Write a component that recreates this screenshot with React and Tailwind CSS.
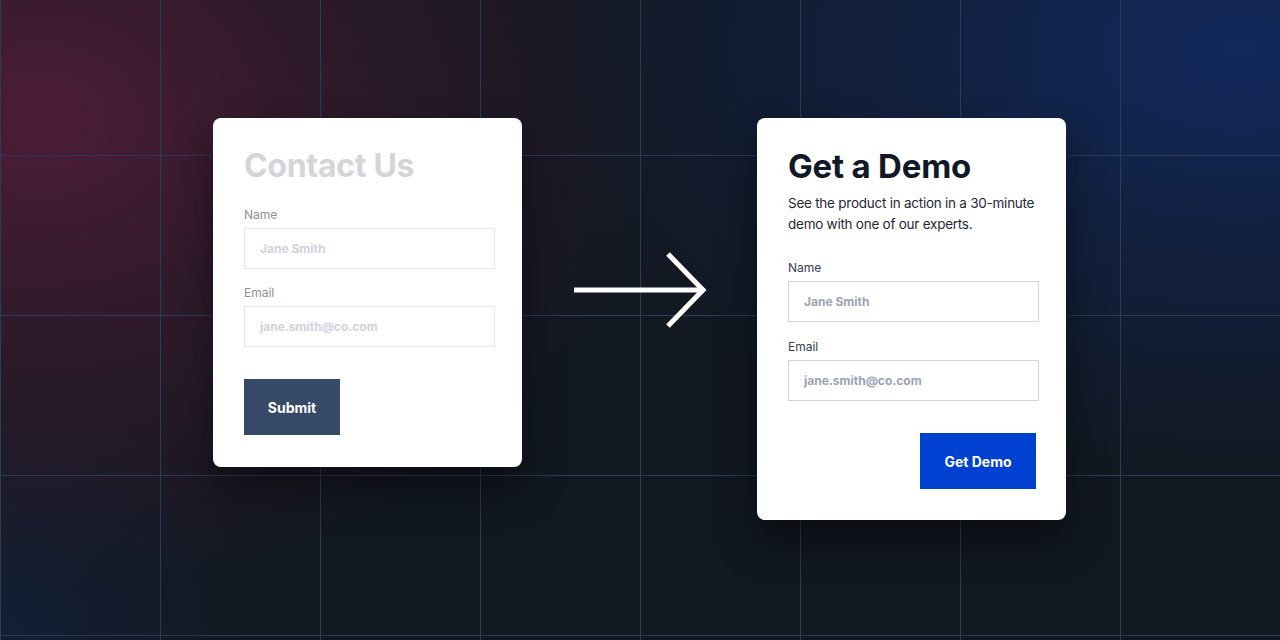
import React from "react";

const Field = ({ label, placeholder, tone }) => (
  <div className="flex flex-col">
    <label className={`text-[12px] leading-4 mb-[5px] ${tone === "muted" ? "text-[#8a9099]" : "text-[#374151]"}`}>
      {label}
    </label>
    <div
      className={`h-[41px] w-[251px] flex items-center px-[15px] border text-[12px] font-bold ${
        tone === "muted"
          ? "border-[#e5e7eb] text-[#cdd3de]"
          : "border-[#d1d5db] text-[#9aa3b5]"
      }`}
    >
      {placeholder}
    </div>
  </div>
);

const Arrow = () => (
  <svg width="136" height="76" viewBox="0 0 136 76" className="mt-[134px]">
    <path d="M2 38 H130" stroke="white" strokeWidth="5" fill="none" />
    <path d="M96 2 L131 38 L96 74" stroke="white" strokeWidth="5" fill="none" />
  </svg>
);

export default function App() {
  return (
    <div className="w-[1280px] h-[640px] overflow-hidden bg-[#121820] bg-[radial-gradient(ellipse_620px_470px_at_40px_120px,#4d1d35_0%,rgba(70,28,50,0.6)_40%,rgba(18,24,32,0)_100%),radial-gradient(ellipse_720px_430px_at_1240px_50px,#12295c_0%,rgba(18,40,90,0.6)_40%,rgba(18,24,32,0)_100%),radial-gradient(circle_260px_at_0px_640px,rgba(20,40,80,0.45)_0%,rgba(18,24,32,0)_100%)]">
      <div
        className="w-full h-full flex items-start pl-[213px] pt-[118px] bg-[linear-gradient(to_right,#2b3a55_1px,transparent_1px),linear-gradient(to_bottom,#2b3a55_1px,transparent_1px)] bg-[size:160px_160px] bg-[position:0_-5px]"
        style={{ fontFamily: "Inter, 'Noto Sans', sans-serif" }}
      >
        {/* Old form */}
        <div className="w-[309px] h-[349px] bg-white rounded-[8px] shadow-[0_20px_40px_rgba(0,0,0,0.45)] pt-[30px] pl-[31px] flex flex-col">
          <h2 className="text-[32px] leading-[36px] font-bold text-[#d4d5d8] tracking-[-0.3px]">Contact Us</h2>
          <div className="mt-[23px] flex flex-col gap-[16px]">
            <Field label="Name" placeholder="Jane Smith" tone="muted" />
            <Field label="Email" placeholder="jane.smith@co.com" tone="muted" />
          </div>
          <button className="mt-[32px] w-[96px] h-[56px] bg-[#364a68] text-white text-[14px] font-bold">
            Submit
          </button>
        </div>

        <div className="ml-[50px] mr-[49px]">
          <Arrow />
        </div>

        {/* New form */}
        <div className="w-[309px] h-[402px] bg-white rounded-[8px] shadow-[0_20px_40px_rgba(0,0,0,0.45)] pt-[30px] pl-[31px] pr-[27px] flex flex-col">
          <h2 className="text-[33px] leading-[36px] font-bold text-[#111827] tracking-[-0.2px]">Get a Demo</h2>
          <p className="mt-[9px] text-[13.5px] leading-[21px] text-[#1f2937] whitespace-nowrap tracking-[-0.25px]">
            See the product in action in a 30-minute
            <br />
            demo with one of our experts.
          </p>
          <div className="mt-[25px] flex flex-col gap-[17px]">
            <Field label="Name" placeholder="Jane Smith" />
            <Field label="Email" placeholder="jane.smith@co.com" />
          </div>
          <div className="flex justify-end">
            <button className="mt-[32px] mr-[3px] w-[116px] h-[56px] bg-[#0041d1] text-white text-[14px] font-bold">
              Get Demo
            </button>
          </div>
        </div>
      </div>
    </div>
  );
}
